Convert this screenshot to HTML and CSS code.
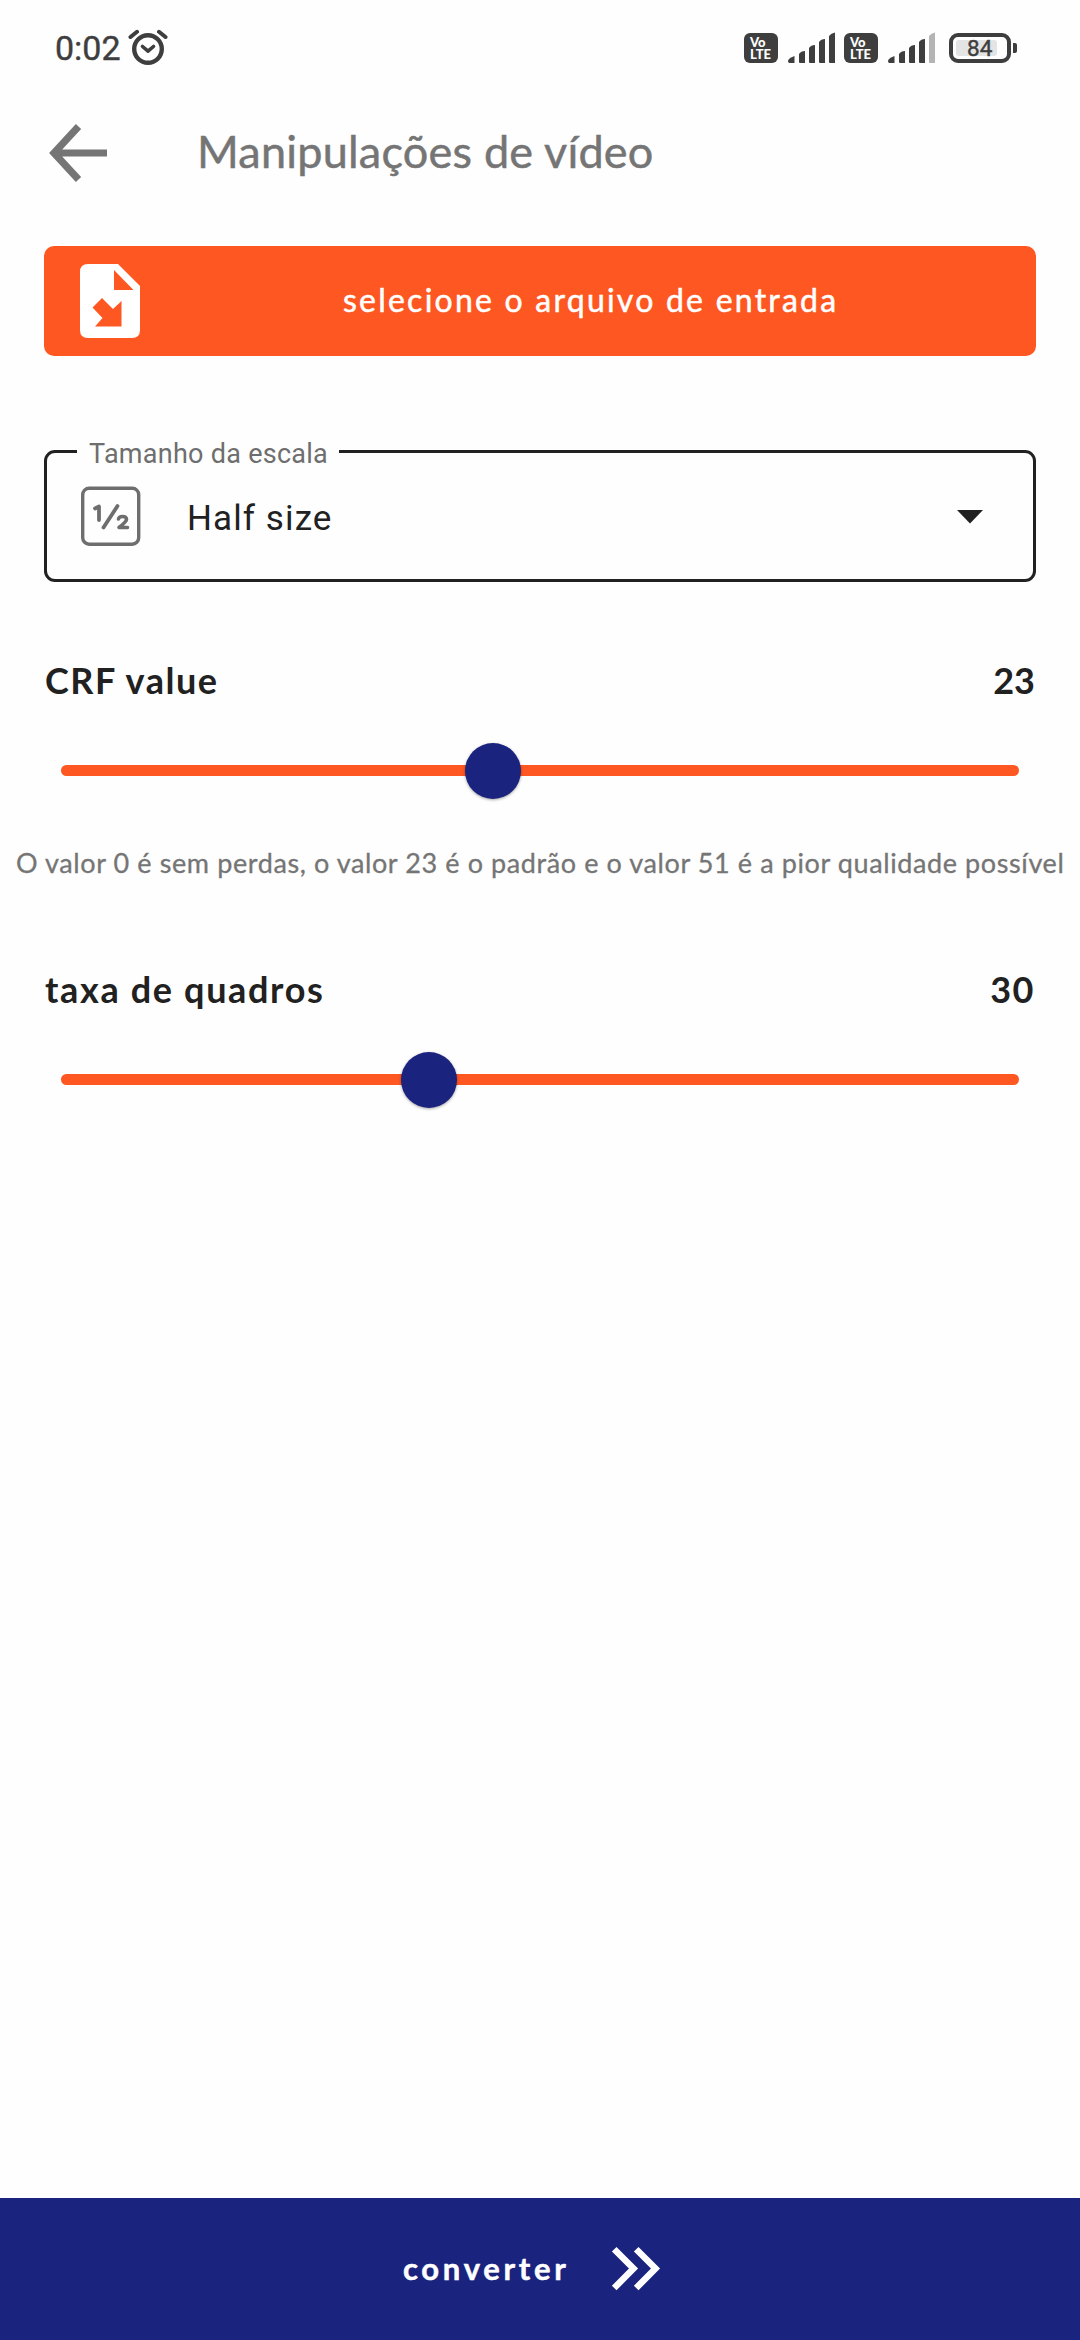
FILE: index.html
```html
<!DOCTYPE html>
<html lang="pt">
<head>
<meta charset="utf-8">
<title>Manipulações de vídeo</title>
<link rel="stylesheet" href="styles.css">
</head>
<body>
<div class="screen">
  <header class="status">
    <span class="clock">0:02</span>
    <svg class="alarm" width="40" height="36" viewBox="0 0 40 36" fill="none" stroke="#3e3e3e" stroke-linecap="round">
      <circle cx="20" cy="20" r="13.8" stroke-width="4.4"/>
      <path d="M14.5 17.5L20 22.2L25.5 17.5" stroke-width="3.6" stroke-linejoin="round"/>
      <path d="M2.5 8L9 2.800M37.500 8L31 2.800" stroke-width="4"/>
    </svg>
    <span class="spacer"></span>
    <span class="volte"><b>Vo</b><b>LTE</b></span>
    <svg class="signal" width="48" height="32" viewBox="0 0 48 32" fill="#3e3e3e">
      <path d="M0 29Q0 26.500 6.500 24V31H1.500Q0 31 0 29Z"/>
      <path d="M11 22Q13 19 17 19V31H12Q11 31 11 30Z"/>
      <path d="M21 16Q23 13 27 13V31H22Q21 31 21 30Z"/>
      <path d="M31 10Q33 7 37 7V31H32Q31 31 31 30Z"/>
      <path d="M41 4Q43 1 47 0.500V31H42Q41 31 41 30Z"/>
    </svg>
    <span class="volte second"><b>Vo</b><b>LTE</b></span>
    <svg class="signal" width="48" height="32" viewBox="0 0 48 32" fill="#3e3e3e">
      <path d="M0 29Q0 26.500 6.500 24V31H1.500Q0 31 0 29Z"/>
      <path d="M11 22Q13 19 17 19V31H12Q11 31 11 30Z"/>
      <path d="M21 16Q23 13 27 13V31H22Q21 31 21 30Z"/>
      <path d="M31 10Q33 7 37 7V31H32Q31 31 31 30Z"/>
      <path d="M41 4Q43 1 47 0.500V31H42Q41 31 41 30Z" fill="#b4b4b4"/>
    </svg>
    <span class="battery"><span class="level">84</span></span>
    <span class="nub"></span>
  </header>

  <div class="appbar">
    <svg width="60" height="60" viewBox="0 0 60 60" fill="none" stroke="#757575" stroke-width="7.200">
      <path d="M31.500 3.500L7 30L31.500 56.500M7 30H60"/>
    </svg>
    <h1 class="title">Manipulações de vídeo</h1>
  </div>

  <button class="pick">
    <svg width="60" height="74" viewBox="0 0 60 74">
      <path fill="#fff" fill-rule="evenodd" d="M8 0H38L60 22V66Q60 74 52 74H8Q0 74 0 66V8Q0 0 8 0ZM34 6V26H53.500ZM22 34L12.500 43.500L22.500 54L15 62.500H41.500V37L33 45Z"/>
    </svg>
    <span class="pick-text">selecione o arquivo de entrada</span>
  </button>

  <div class="select">
    <span class="select-label">Tamanho da escala</span>
    <svg width="60" height="60" viewBox="0 0 60 60" fill="none" stroke="#6e6e6e" stroke-linecap="round" stroke-linejoin="round">
      <rect x="1.700" y="2.200" width="56" height="56" rx="6.500" stroke-width="3.400"/>
      <path d="M14 22.500L18 20.500V34M36.500 20L22.500 41.500" stroke-width="3.800"/>
      <path d="M37.500 33Q38 30.500 41.500 30.500Q45.500 30.500 45.500 33.500Q45.500 35.500 38 41.500H46.500" stroke-width="3.600"/>
    </svg>
    <span class="select-value">Half size</span>
    <svg class="caret" width="26" height="14" viewBox="0 0 26 14"><path d="M0 0H26L13 13.500Z" fill="#212121"/></svg>
  </div>

  <section class="setting">
    <div class="setting-head"><span class="crf">CRF value</span><span class="num-crf">23</span></div>
    <div class="slider"><span class="thumb" style="left:432px"></span></div>
    <p class="hint">O valor 0 é sem perdas, o valor 23 é o padrão e o valor 51 é a pior qualidade possível</p>
  </section>

  <section class="setting rate">
    <div class="setting-head"><span class="fps">taxa de quadros</span><span class="num-fps">30</span></div>
    <div class="slider"><span class="thumb" style="left:368px"></span></div>
  </section>

  <button class="convert">
    <span class="convert-text">converter</span>
    <svg width="50" height="46" viewBox="0 0 50 46" fill="none" stroke="#fff" stroke-width="6.500">
      <path d="M3.200 3.200L22.500 22.500L3.200 42M25.200 3.200L44.500 22.500L25.200 42"/>
    </svg>
  </button>
</div>
</body>
</html>
```
FILE: styles.css
```css
* { box-sizing: border-box; }
body { margin: 0; background: #fefefe; }
svg { display: block; flex: none; }
button { border: 0; font: inherit; }

.screen {
  width: 1080px;
  height: 2340px;
  display: flex;
  flex-direction: column;
  overflow: hidden;
  font-family: Lato, "Open Sans", sans-serif;
  color: #212121;
  white-space: nowrap;
}

.status {
  height: 95px;
  flex: none;
  display: flex;
  align-items: center;
  padding: 0 63px 0 55px;
  color: #3e3e3e;
  font-family: Roboto, sans-serif;
}
.clock { width: 73px; font-size: 34px; line-height: 40px; -webkit-text-stroke: 0.4px; }
.alarm { margin-top: -2px; }
.spacer { flex: 1; }
.volte {
  width: 34px;
  height: 30px;
  margin-right: 10px;
  padding: 3px 0 0 6px;
  border-radius: 6px;
  background: #3e3e3e;
  color: #fff;
  font: 900 13px/12px Lato, sans-serif;
}
.volte b { display: block; font-weight: 900; }
.volte.second { margin-left: 8px; }
.battery {
  width: 62px;
  height: 30px;
  margin-left: 13px;
  padding: 4px;
  border: 4px solid #3e3e3e;
  border-radius: 9px;
}
.level {
  display: block;
  width: 41px;
  height: 16px;
  margin: -1px 0 0 -1px;
  padding-left: 11px;
  border-radius: 3px;
  background: #e4e4e4;
  font-size: 22.5px;
  line-height: 17px;
  -webkit-text-stroke: 0.4px;
}
.nub { width: 4px; height: 10px; margin-left: 2px; border-radius: 0 2px 2px 0; background: #3e3e3e; }

.appbar { height: 116px; flex: none; display: flex; align-items: center; padding-left: 47px; }
.title {
  margin: -5px 0 0 90px;
  font-size: 45px;
  font-weight: 400;
  line-height: 60px;
  letter-spacing: 0.22px;
  color: #757575;
  -webkit-text-stroke: 0.5px;
}

.pick {
  height: 110px;
  flex: none;
  margin: 35px 44px 0;
  padding: 0 0 0 36px;
  display: flex;
  align-items: center;
  border-radius: 10px;
  background: #ff5722;
  color: #fff;
}
.pick-text {
  margin: -4px 0 0 203px;
  font-size: 32px;
  letter-spacing: 2.23px;
  -webkit-text-stroke: 0.5px;
}

.select {
  position: relative;
  height: 132px;
  flex: none;
  margin: 94px 44px 0;
  padding: 0 50px 0 34px;
  display: flex;
  align-items: center;
  border: 3px solid #212121;
  border-radius: 11px;
  font-family: Roboto, sans-serif;
}
.select-label {
  position: absolute;
  left: 30px;
  top: -15px;
  width: 262px;
  padding-left: 12px;
  background: #fefefe;
  color: #6e6e6e;
  font-size: 27px;
  line-height: 32px;
  letter-spacing: 0.27px;
}
.select-value { flex: 1; margin: 4px 0 0 46px; font-size: 35px; letter-spacing: 1.1px; }
.caret { margin-top: 2px; }

.setting { flex: none; margin-top: 73px; }
.setting-head {
  display: flex;
  justify-content: space-between;
  height: 50px;
  padding: 0 45px;
  font-size: 36px;
  font-weight: 700;
  line-height: 51px;
}
.crf { letter-spacing: 1.55px; }
.fps { letter-spacing: 1.65px; }
.num-fps { letter-spacing: 1.5px; }
.slider {
  position: relative;
  height: 11px;
  margin: 60px 61px 0;
  border-radius: 6px;
  background: #ff5722;
}
.thumb {
  position: absolute;
  top: -22.5px;
  width: 56px;
  height: 56px;
  margin-left: -28px;
  border-radius: 50%;
  background: #1a237e;
  box-shadow: 0 1px 3px rgba(0, 0, 0, 0.35);
}
.hint {
  margin: 67px 0 0 16px;
  font-size: 27px;
  line-height: 40px;
  letter-spacing: 0.6px;
  color: #757575;
  -webkit-text-stroke: 0.3px;
}
.rate { margin-top: 81px; }

.convert {
  height: 142px;
  flex: none;
  margin-top: auto;
  padding: 0 0 0 403px;
  display: flex;
  align-items: center;
  background: #1a237e;
  color: #fff;
}
.convert-text {
  width: 208px;
  text-align: left;
  margin-top: -3px;
  font-size: 31px;
  font-weight: 700;
  letter-spacing: 3.7px;
  -webkit-text-stroke: 0.5px;
}
```
